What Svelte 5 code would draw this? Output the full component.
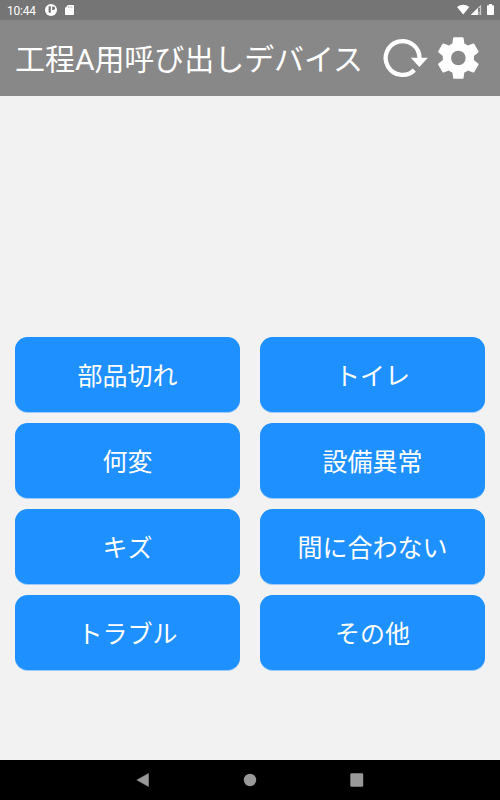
<script>
  const calls = ['部品切れ', 'トイレ', '何変', '設備異常', 'キズ', '間に合わない', 'トラブル', 'その他'];
</script>

<div class="screen">
  <div class="status">
    <span class="time">10:44</span>
    <svg class="app" width="12" height="12" viewBox="0 0 12 12">
      <circle cx="6" cy="6" r="6" fill="#fff" />
      <path d="M3.600 2.200h2.200v6.600a3 3 0 0 1-2.200-.4zM7.200 2.400h1.100a1.700 1.700 0 0 1 0 3.600H7.200z" fill="#757575" />
    </svg>
    <svg class="card" width="9" height="10" viewBox="0 0 9 10">
      <path d="M3 0h5.300q.7 0 .7.7v8.600q0 .7-.7.7H.7Q0 10 0 9.300V3z" fill="#fff" />
      <path d="M3.500 1.200v1.700M5.200 1.200v1.700M6.900 1.200v1.700" stroke="#aaa" stroke-width=".7" />
    </svg>
    <svg class="signals" width="40" height="12" viewBox="0 0 40 12">
      <path d="M0 3Q6.200-1.400 12.400 3L6.200 10.600z" fill="#fff" />
      <path d="M13.800 10.900L24.200.5v10.400z" fill="#c8c8c8" />
      <path d="M13.800 10.900L20.800 3.900v7z" fill="#fff" />
      <path d="M22 3.900v4.300M22 9.200v1.200" stroke="#555" stroke-width="1.200" />
      <path d="M32 0h3v1.200h1.300q.7 0 .7.7v8.400q0 .7-.7.7h-5.600q-.7 0-.7-.7V1.900q0-.7.7-.7H32z" fill="#fff" />
    </svg>
  </div>

  <header>
    <h1>工程A用呼び出しデバイス</h1>
    <button class="icon" aria-label="更新">
      <svg width="50" height="50" viewBox="0 0 50 50">
        <path d="M41.500 25A16.900 16.900 0 1 0 36.400 37.100" fill="none" stroke="#fff" stroke-width="4.300" />
        <path d="M32.700 24.800h17.200l-8.500 9.200z" fill="#fff" />
      </svg>
    </button>
    <button class="icon gear" aria-label="設定">
      <svg width="50" height="50" viewBox="-.17 0 24 24">
        <path fill="#fff" d="M12 15.500A3.500 3.500 0 0 1 8.500 12 3.500 3.500 0 0 1 12 8.500 3.500 3.500 0 0 1 15.500 12 3.500 3.500 0 0 1 12 15.500M19.430 12.970C19.470 12.650 19.500 12.330 19.500 12S19.470 11.340 19.430 11L21.540 9.370C21.730 9.220 21.780 8.950 21.660 8.730L19.660 5.270C19.540 5.050 19.270 4.960 19.050 5.050L16.560 6.050C16.040 5.660 15.500 5.320 14.870 5.070L14.500 2.420C14.460 2.180 14.250 2 14 2H10C9.750 2 9.540 2.180 9.500 2.420L9.130 5.070C8.500 5.320 7.960 5.660 7.440 6.050L4.950 5.050C4.730 4.960 4.460 5.050 4.340 5.270L2.340 8.730C2.210 8.950 2.270 9.220 2.460 9.370L4.570 11C4.530 11.340 4.500 11.670 4.500 12S4.530 12.650 4.570 12.970L2.460 14.630C2.270 14.780 2.210 15.050 2.340 15.270L4.340 18.730C4.460 18.950 4.730 19.030 4.950 18.950L7.440 17.940C7.960 18.340 8.500 18.680 9.130 18.930L9.500 21.580C9.540 21.820 9.750 22 10 22H14C14.250 22 14.460 21.820 14.500 21.580L14.870 18.930C15.500 18.670 16.040 18.340 16.560 17.940L19.050 18.950C19.270 19.030 19.540 18.950 19.660 18.730L21.660 15.270C21.780 15.050 21.730 14.780 21.540 14.630Z" />
      </svg>
    </button>
  </header>

  <main>
    {#each calls as call}
      <button class="call">{call}</button>
    {/each}
  </main>

  <nav>
    <svg width="14" height="14" viewBox="0 0 14 14"><path d="M.8 7L12.500.4v13.200z" fill="#999" stroke="#999" stroke-width=".5" stroke-linejoin="round" /></svg>
    <svg width="14" height="14" viewBox="0 0 14 14"><circle cx="7" cy="7" r="6.200" fill="#999" /></svg>
    <svg width="14" height="14" viewBox="0 0 14 14"><rect x=".3" y=".3" width="12.900" height="13.400" rx="1.300" fill="#999" /></svg>
  </nav>
</div>

<style>
  .screen {
    width: 500px;
    height: 800px;
    display: flex;
    flex-direction: column;
    background: #f2f2f2;
    color: #fff;
    font-family: Roboto, 'Noto Sans CJK JP', sans-serif;
    overflow: hidden;
  }
  svg {
    display: block;
    flex: none;
  }
  button {
    border: 0;
    padding: 0;
    color: inherit;
    font-family: inherit;
  }
  .status {
    height: 20px;
    flex: none;
    box-sizing: border-box;
    display: flex;
    align-items: center;
    padding: 0 3px 0 7px;
    background: #757575;
  }
  .time {
    width: 38px;
    padding-top: 2px;
    font-size: 12px;
    line-height: 18px;
    letter-spacing: -0.2px;
  }
  .card {
    margin-left: 8px;
  }
  .signals {
    margin-left: auto;
  }
  header {
    height: 76px;
    flex: none;
    box-sizing: border-box;
    display: flex;
    align-items: center;
    padding: 0 17px 0 15px;
    background: #888;
  }
  h1 {
    flex: 1;
    min-width: 0;
    margin: 0;
    padding-top: 4px;
    font-size: 30px;
    line-height: 44px;
    font-weight: 400;
    letter-spacing: -0.05px;
    white-space: nowrap;
  }
  .icon {
    background: none;
  }
  .gear {
    margin-left: 5px;
  }
  main {
    flex: 1;
    display: grid;
    grid-template-columns: 225px 225px;
    grid-auto-rows: 75px;
    gap: 11px 20px;
    align-content: end;
    justify-content: center;
    padding-bottom: 90px;
  }
  .call {
    padding-top: 4px;
    border-radius: 12.500px;
    background: #1e90ff;
    box-shadow: 0 1px 0 rgba(30, 144, 255, 0.4);
    font-size: 25px;
    line-height: 36px;
  }
  nav {
    height: 40px;
    flex: none;
    display: flex;
    align-items: center;
    justify-content: center;
    gap: 93px;
    background: #000;
  }
</style>
